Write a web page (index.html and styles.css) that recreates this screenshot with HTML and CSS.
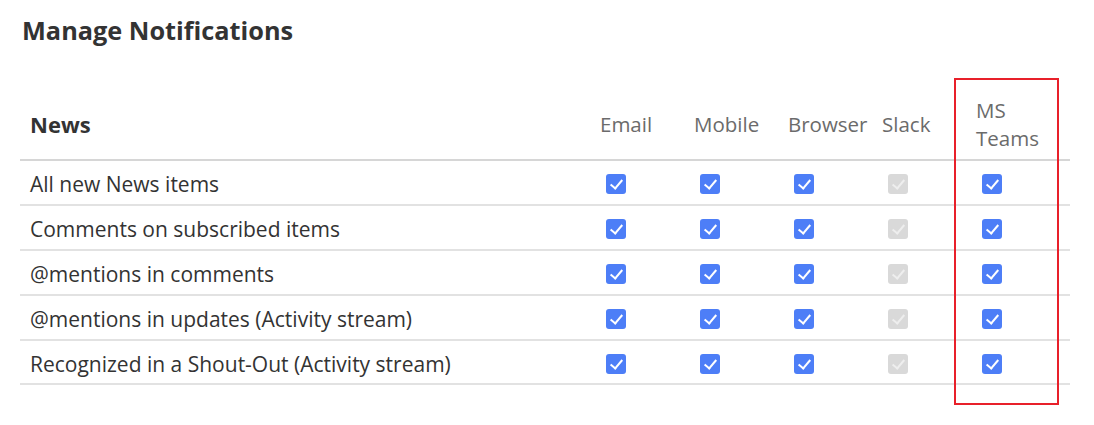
FILE: index.html
```html
<!DOCTYPE html>
<html>
<head>
<meta charset="utf-8">
<link rel="stylesheet" href="styles.css">
</head>
<body>
<div class="page">
  <h1 class="title">Manage Notifications</h1>
  <div class="table-wrap">
    <table class="notif">
      <thead>
        <tr>
          <th class="label-col">News</th>
          <th class="ch">Email</th>
          <th class="ch">Mobile</th>
          <th class="ch">Browser</th>
          <th class="ch">Slack</th>
          <th class="ch">MS<br>Teams</th>
          <th class="end"></th>
        </tr>
      </thead>
      <tbody>
        <tr>
          <td class="label">All new News items</td>
          <td><span class="cb"></span></td><td><span class="cb"></span></td><td><span class="cb"></span></td><td><span class="cb off"></span></td><td><span class="cb"></span></td><td></td>
        </tr>
        <tr>
          <td class="label">Comments on subscribed items</td>
          <td><span class="cb"></span></td><td><span class="cb"></span></td><td><span class="cb"></span></td><td><span class="cb off"></span></td><td><span class="cb"></span></td><td></td>
        </tr>
        <tr>
          <td class="label">@mentions in comments</td>
          <td><span class="cb"></span></td><td><span class="cb"></span></td><td><span class="cb"></span></td><td><span class="cb off"></span></td><td><span class="cb"></span></td><td></td>
        </tr>
        <tr>
          <td class="label">@mentions in updates (Activity stream)</td>
          <td><span class="cb"></span></td><td><span class="cb"></span></td><td><span class="cb"></span></td><td><span class="cb off"></span></td><td><span class="cb"></span></td><td></td>
        </tr>
        <tr>
          <td class="label">Recognized in a Shout-Out (Activity stream)</td>
          <td><span class="cb"></span></td><td><span class="cb"></span></td><td><span class="cb"></span></td><td><span class="cb off"></span></td><td><span class="cb"></span></td><td></td>
        </tr>
      </tbody>
    </table>
    <div class="highlight"></div>
  </div>
</div>
</body>
</html>
```
FILE: styles.css
```css
* { box-sizing: border-box; }
html, body { margin: 0; padding: 0; background: #fff; }
body { font-family: "Open Sans", "Liberation Sans", sans-serif; color: #333; }
.page { padding: 13px 24px 40px 20px; }
.title { margin: 0 0 0 2px; font-size: 25.3px; font-weight: 700; color: #333; line-height: 34px; }
.table-wrap { position: relative; margin-top: 41px; }
.notif { width: 1050px; border-collapse: collapse; table-layout: fixed; }
.notif th { font-weight: 400; text-align: left; vertical-align: middle; padding: 0; }
.notif thead tr { height: 72px; border-bottom: 2px solid #d6d6d6; }
.notif th.label-col { width: 575px; padding-left: 10px; font-size: 22px; font-weight: 700; color: #333; }
.notif th.ch { width: 94px; padding-left: 5px; font-size: 20.5px; color: #6b6b6b; line-height: 28px; }
.notif th.end { width: auto; }
.notif tbody tr { height: 44.9px; border-bottom: 2px solid #e2e2e2; }
.notif td { padding: 3px 0 0 11px; vertical-align: middle; }
.notif td.label { padding-left: 10px; font-size: 21px; color: #333; }
.cb { display: block; width: 20px; height: 20px; border-radius: 3px; background: #4d7ef7; position: relative; }
.cb::after { content: ""; position: absolute; left: 7px; top: 3px; width: 5px; height: 10px; border: solid #fff; border-width: 0 2.5px 2.5px 0; transform: rotate(40deg); }
.cb.off { background-color: #d9d9d9; }
.cb.off::after { border-color: #eeeeee; }
.highlight { position: absolute; left: 934px; top: -10px; width: 105px; height: 327px; border: 2.5px solid #e8202a; }
```
